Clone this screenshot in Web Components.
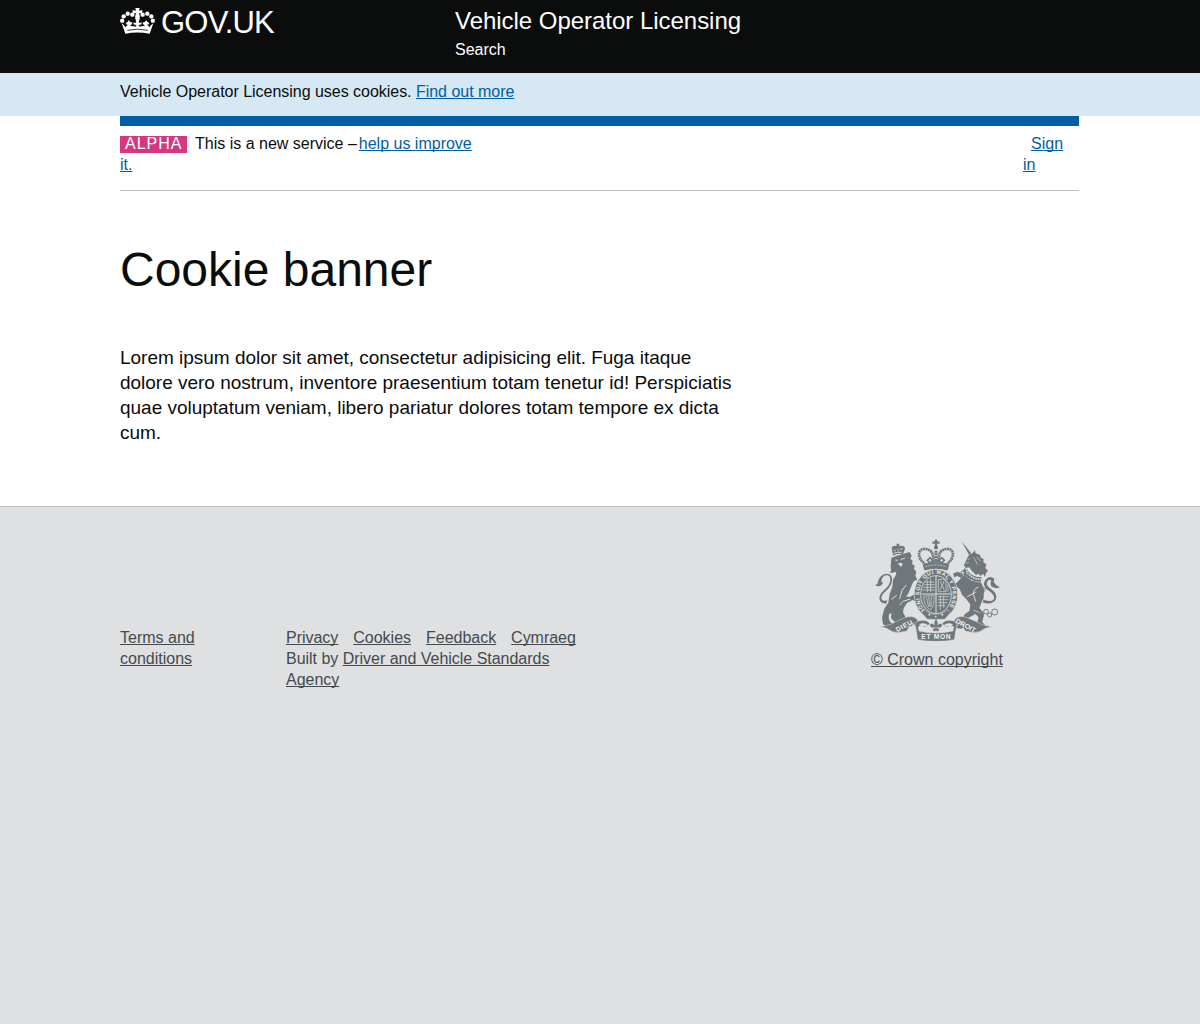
<!DOCTYPE html>
<html lang="en">
<head>
<meta charset="utf-8">
<title>Cookie banner</title>
<style>
html,body{margin:0;padding:0}
body{font-family:"Liberation Sans",Arial,sans-serif;font-size:16px;line-height:21px;color:#0b0c0c;background:#dee0e2}
</style>
</head>
<body>
<vol-page></vol-page>
<script>
function define(name, html) {
  const t = document.createElement('template');
  t.innerHTML = html;
  customElements.define(name, class extends HTMLElement {
    constructor() {
      super();
      this.attachShadow({mode: 'open'}).appendChild(t.content.cloneNode(true));
    }
  });
}

define('text-link', `<style>
:host{display:inline;color:var(--link,#005ea5)}
a{color:inherit;text-decoration:underline;text-decoration-thickness:1px;text-underline-offset:1px;text-decoration-skip-ink:none}
</style><a href="#"><slot></slot></a>`);

define('crown-icon', `<style>:host{display:block;width:35px;height:26px}svg{display:block}</style>
<svg width="35" height="26" viewBox="0 0 105 78" fill="#fff" aria-hidden="true">
<path d="M46 0h13l-2 8 10-2v11l-10-2 3 12h-15l3-12-10 2V6l10 2z"/>
<circle cx="52.500" cy="31" r="7"/>
<circle cx="37" cy="20" r="6.500"/><circle cx="23" cy="17" r="6.500"/><circle cx="11" cy="25" r="6.500"/><circle cx="6.500" cy="38" r="6.500"/>
<circle cx="68" cy="20" r="6.500"/><circle cx="82" cy="17" r="6.500"/><circle cx="94" cy="25" r="6.500"/><circle cx="98.500" cy="38" r="6.500"/>
<path d="M5 46Q13 50 16 58Q18 53 24 51Q18 50 17 45Q24 44 26 37Q30 44 38 44Q36 50 30 52Q35 56 43 54Q40 48 40 43Q45 46 49 43L47 36H58L56 43Q60 46 65 43Q65 48 62 54Q70 56 75 52Q69 50 67 44Q75 44 79 37Q82 44 88 45Q87 50 81 51Q87 53 89 58Q92 50 100 46L89 77Q52 70 16 77Z"/>
<path d="M22 67Q52 60 83 67" fill="none" stroke="#0b0c0c" stroke-width="2.500"/>
<path d="M43 48l7 5-7 5zm19 0l-7 5 7 5z" fill="#0b0c0c"/>
</svg>`);

define('site-header', `<style>
:host{display:block;background:#0b0c0c;color:#fff;height:73px}
.in{width:960px;margin:0 auto;display:flex}
.logo{width:335px;display:flex;padding-top:8px;box-sizing:border-box}
.word{font-size:31px;line-height:30px;margin-left:6px;letter-spacing:-.8px}
.name{font-size:24px;line-height:30px;padding-top:6px;letter-spacing:-.03px}
.nav{line-height:21px;padding-top:3px}
</style><div class="in"><div class="logo"><crown-icon></crown-icon><div class="word">GOV.UK</div></div>
<div><div class="name">Vehicle Operator Licensing</div><div class="nav">Search</div></div></div>`);

define('cookie-bar', `<style>
:host{display:block;background:#d5e8f3;height:43px}
p{margin:0 auto;width:960px;padding-top:8px;letter-spacing:-.027px}
</style><p><slot></slot></p>`);

define('phase-banner', `<style>
:host{display:flex;justify-content:space-between;width:959px;height:74px;box-sizing:border-box;margin-left:120px;border-top:10px solid #005ea5;padding-top:7px}
.tag{display:inline-block;background:linear-gradient(#d53880,#d53880) 0 1px no-repeat;color:#fff;letter-spacing:1px;line-height:17px;height:18px;margin:0 8px -1px 0;padding:0 4.5px 0 5px;vertical-align:baseline}
.sign{width:56px;text-indent:8px}
</style><div><span class="tag">ALPHA</span>This is a new service –<text-link style="margin-left:2px">help us improve<br>it.</text-link></div>
<div class="sign"><text-link>Sign<br>in</text-link></div>`);

define('page-content', `<style>
:host{display:block;width:959px;margin-left:120px;border-top:1px solid #bfc1c3;height:315px}
h1{font-weight:400;font-size:48px;line-height:50px;margin:54px 0 0}
p{font-size:19px;line-height:25px;margin:50px 0 0;width:640px;letter-spacing:-.015px}
</style><h1><slot name="title"></slot></h1><p><slot></slot></p>`);

define('royal-arms', `<style>:host{display:block;width:125px;height:102px}svg{display:block}text{font-family:"Liberation Sans",Arial,sans-serif;font-weight:700}</style>
<svg width="125" height="102" viewBox="30 27 375 306" fill="#6f777b" aria-hidden="true">
<g>
<path d="M80 52q7-8 14-3l1-8h8v8q12-5 17 4l-2 10-5 10Q97 68 85 77l-3-11z"/>
<path d="M86 59l6 4m6-7l2 6m5-4l8-2M86 70q12-5 25-3" stroke="#dee0e2" stroke-width="2.600" fill="none"/>
<path d="M79 84L91 79l20-6 23-7 6 11-4 9 7 6-2 9 8 7-2 9 7 8-3 12 6 12-10 4-5 8-11 27q-3 8-9 11l12 2 15-8 12 8-2 6 9 6-11 5-14-8-17 9-10 16-2 12 9 17 10 11 11 6-4 8H98l-4-8-16-17 1-15-7 4-1 12 5 12 10 5-3 6H62l-8-6-3-19 7-27 12-18 4-26 8-21 2-22 10-16-2-8-12 4-7-3 6-4-2-11z"/>
<path d="M91 90l7 1m9-2l13-5" stroke="#dee0e2" stroke-width="3" fill="none"/><path d="M98 101l9-3 6 3-4 10z" fill="#dee0e2"/>
<path d="M124 165l-13 16-7 26m0 18l10-11 22-7M79 208l16-12" stroke="#dee0e2" stroke-width="3" fill="none"/>
<path d="M64 221Q42 221 43 202Q45 190 60 178Q75 164 76 150Q76 134 63 136Q50 139 49 155Q58 158 49 165Q42 173 30 165Q41 162 38 155Q46 132 64 131Q82 130 81 151Q80 167 65 181Q49 195 49 205Q51 216 67 211Z"/>
</g>
<g>
<path d="M290 34l28 35-6 5z"/>
<path d="M312 74l12-6 6-7 2 9 13 5 3 9 8 3-1 10 9 6-3 11 8 9-6 5-3 13-6-10-7 7-7-7-7 4-9-9-5-5-6-9-9 1-8-7 5-10z"/>
<path d="M308 89l6-3m-13 14l10-3m13-15l6 7 8 15m-3-24l12 14" stroke="#dee0e2" stroke-width="1.800" fill="none"/>
<path d="M304 109l5 15 11 10 14 6 16 2-3 14-19-3-18-8-14-12-3-10z"/>
<path d="M303 114l4 15 11 10 14 7 17 2" stroke="#dee0e2" stroke-width="5" stroke-dasharray="5 2.500" fill="none"/>
<path d="M297 134l8 8 15 10 29 6 8 20-1 26-7 15-6 15 14 16-5 27 9 9-4 8-17-2-6-8 7-21-9-11-19 10-20 15 8 10-11 9-23-3 8-11 15-10 9-19 14-10 3-20-12-15-13-14-7-17-12-10-10 3-3 20 7 12-7 6-10-11-4-17-8-7 4-9 20-5 13 1z"/>
<path d="M265 130l15-5 14 11-5 8-12-6-10 4z"/><circle cx="293" cy="128" r="5" fill="#dee0e2" stroke="#6f777b" stroke-width="3"/>
<path d="M340 171q-15 6-15 22l7 21m-25-14l25-13m-6 54l20 8" stroke="#dee0e2" stroke-width="3" fill="none"/>
<path d="M355 209Q389 220 387 201Q385 191 368 180Q350 166 361 150Q373 135 388 146L386 156Q393 168 405 172Q394 177 384 172Q372 165 379 152Q370 145 366 157Q363 167 379 178Q400 193 392 210Q380 225 354 218Z"/>
</g>
<g fill="none" stroke="#6f777b">
<path d="M183 104C152 83 158 54 183 57c19 3 24 18 22 42M243 104C274 83 268 54 243 57c-19 3-24 18-22 42" stroke-width="8" stroke-dasharray="6 1.500"/>
<path d="M213 29v29M202 38h22M207 52h12" stroke-width="7"/>
<path d="M213 62v35" stroke-width="9" stroke-dasharray="6 2"/>
<path d="M175 104Q213 92 251 104l-4 16Q213 109 179 120z" fill="#6f777b" stroke-width="3"/>
<path d="M187 91l8-8 8 8-8 8zm35 0l8-8 8 8-8 8zM205 93h16" stroke-width="5"/>
</g>
<path d="M181 110Q213 100 245 110" stroke="#dee0e2" stroke-width="2.300" stroke-dasharray="6 3" fill="none"/>
<ellipse cx="213" cy="194" rx="65" ry="76" stroke="#dee0e2" stroke-width="2"/>
<ellipse cx="213" cy="194" rx="46" ry="57" fill="none" stroke="#dee0e2" stroke-width="2.500"/>
<g fill="none" stroke="#dee0e2" stroke-width="2">
<path d="M213 138v112M169 192h88" stroke-width="3"/>
<path d="M181 156h28M178 164h31M175 172h34M172 180h37M187 152v34M197 145v41"/>
<path d="M220 148h23v37h-23zM225 152l13 29m0-29l-13 29M249 162v23"/>
<path d="M176 198q0 30 20 42 13-12 11-43zM184 200l7 31m0-31l4 31m4-31l-1 30"/>
<path d="M219 200h32M219 209h31M219 218h28M219 227h22M226 197v43M236 197v36"/>
</g>
<path id="garter" d="M183 244.500A50 63 0 1 1 243 244.500" fill="none"/>
<text font-size="16" fill="#eef0f0"><textPath href="#garter" textLength="272">HONI SOIT QUI MAL Y PENSE</textPath></text>
<path d="M170 248l7-9 22 13h28l22-13 7 9-17 20h-52z" stroke="#dee0e2" stroke-width="1.500"/>
<path d="M191 252l4 4m17 1v5m22-10l-4 4" stroke="#dee0e2" stroke-width="5"/>
<g stroke="#6f777b" stroke-width="2.800" fill="none">
<circle cx="338" cy="243" r="6"/><circle cx="349" cy="258" r="6"/><circle cx="363" cy="245" r="7"/><circle cx="374" cy="255" r="6"/><circle cx="389" cy="246" r="9"/><circle cx="356" cy="179" r="5"/>
</g>
<g stroke="#dee0e2" stroke-width="1.500">
<path d="M46 290L76 284 94 274 125 261Q147 256 157 269L162 282 151 292Q146 279 139 277L126 303 106 307Q83 310 65 295z"/>
<path d="M380 290L350 284 332 274 301 261Q279 256 269 269L264 282 275 292Q280 279 287 277L300 303 320 307Q343 310 361 295z"/>
<path d="M150 280Q161 268 184 272L196 281 180 292Q165 283 160 291L162 303Q213 315 264 303L266 291Q261 283 246 292L230 281 242 272Q265 268 276 280L268 329Q213 340 158 329z"/>
</g>
<path d="M162 283Q177 275 189 285 180 291 170 289zM264 283Q249 275 237 285 246 291 256 289z" fill="#dee0e2"/>
<path d="M197 270h32v36h-32z" fill="#dee0e2"/>
<path d="M213 269q-7 9-3 19-8-10-15-4 1 10 13 9l-4 9h18l-4-9q12 1 13-9-7-6-15 4 4-10-3-19z" stroke="#6f777b" stroke-width="1.500"/>
<path d="M204 293h18" stroke="#dee0e2" stroke-width="2"/>
<g fill="#f2f3f3">
<text font-size="20" transform="translate(97 306) rotate(-28)" textLength="53">DIEU</text>
<text font-size="20" x="169" y="328" textLength="88">ET MON</text>
<text font-size="20" transform="translate(270 277) rotate(28)" textLength="66" lengthAdjust="spacingAndGlyphs">DROIT</text>
</g>
</svg>`);

define('site-footer', `<style>
:host{display:block;border-top:1px solid #bfc1c3;background:#dee0e2;height:517px;color:#454a4c;--link:#454a4c}
.in{width:960px;margin:0 auto;display:flex}
.terms{width:166px;padding-top:120px}
.meta{width:585px;padding-top:120px;letter-spacing:-.02px}
.links{display:flex;gap:15px}
.arms{padding-top:32px}
royal-arms{margin:0 0 8px 4px}
</style><div class="in">
<div class="terms"><text-link>Terms and<br>conditions</text-link></div>
<div class="meta"><div class="links"><text-link>Privacy</text-link><text-link>Cookies</text-link><text-link>Feedback</text-link><text-link>Cymraeg</text-link></div>
<div>Built by <text-link>Driver and Vehicle Standards<br>Agency</text-link></div></div>
<div class="arms"><royal-arms></royal-arms><text-link>© Crown copyright</text-link></div>
</div>`);

define('vol-page', `<style>:host{display:block}main{background:#fff}</style>
<site-header></site-header>
<cookie-bar>Vehicle Operator Licensing uses cookies. <text-link>Find out more</text-link></cookie-bar>
<main><phase-banner></phase-banner>
<page-content><span slot="title">Cookie banner</span>Lorem ipsum dolor sit amet, consectetur adipisicing elit. Fuga itaque<br>dolore vero nostrum, inventore praesentium totam tenetur id! Perspiciatis<br>quae voluptatum veniam, libero pariatur dolores totam tempore ex dicta<br>cum.</page-content></main>
<site-footer></site-footer>`);
</script>
</body>
</html>
